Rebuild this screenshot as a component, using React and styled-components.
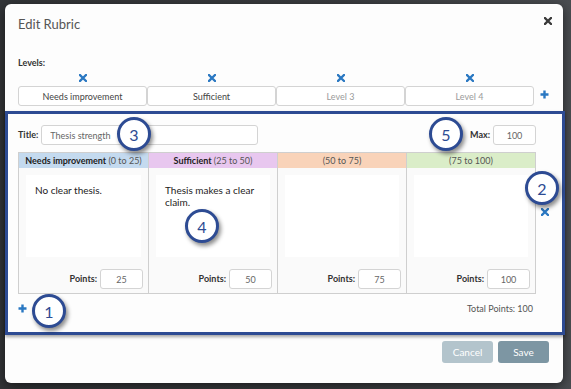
import React from 'react'
import styled, { createGlobalStyle } from 'styled-components'

const GlobalStyle = createGlobalStyle`
    body {
        margin: 0;
        background: #3c3e41;
        font-family: Lato, "Open Sans", sans-serif;
    }
`

const levels = [
    { name: 'Needs improvement', placeholder: false },
    { name: 'Sufficient', placeholder: false },
    { name: 'Level 3', placeholder: true },
    { name: 'Level 4', placeholder: true },
]

const columns = [
    { title: 'Needs improvement', range: '(0 to 25)', color: '#c4daef', text: 'No clear thesis.', points: 25 },
    { title: 'Sufficient', range: '(25 to 50)', color: '#e8c7ef', text: 'Thesis makes a clear claim.', points: 50 },
    { title: '', range: '(50 to 75)', color: '#f9d3b9', text: '', points: 75 },
    { title: '', range: '(75 to 100)', color: '#daedc8', text: '', points: 100 },
]

const callouts = [
    { n: 1, x: 24, y: 180 },
    { n: 2, x: 517, y: 57 },
    { n: 3, x: 109, y: 3 },
    { n: 4, x: 177, y: 95 },
    { n: 5, x: 421, y: 3 },
]

function Times({ color = '#2a78c2', size = 8 }) {
    return (
        <svg width={size} height={size} viewBox="0 0 8 8">
            <path d="M1 1 L7 7 M7 1 L1 7" stroke={color} strokeWidth="2.3" strokeLinecap="square" />
        </svg>
    )
}

function Plus() {
    return (
        <svg width="9" height="9" viewBox="0 0 9 9">
            <path d="M4.5 0.5 V8.5 M0.5 4.5 H8.5" stroke="#2a78c2" strokeWidth="2.4" />
        </svg>
    )
}

function App() {
    return (
        <Page>
            <GlobalStyle />
            <Modal>
                <Header>
                    <Title>Edit Rubric</Title>
                    <Close><Times color="#3a3a3a" /></Close>
                </Header>

                <Levels>
                    <Label>Levels:</Label>
                    <LevelRow>
                        <LevelGrid>
                            {levels.map(l => (
                                <LevelCol key={l.name}>
                                    <IconSlot><Times /></IconSlot>
                                    <LevelInput readOnly value={l.name} $placeholder={l.placeholder} />
                                </LevelCol>
                            ))}
                        </LevelGrid>
                        <AddLevel><Plus /></AddLevel>
                    </LevelRow>
                </Levels>

                <Frame>
                    <TitleRow>
                        <FieldGroup>
                            <Label>Title:</Label>
                            <TitleInput readOnly value="Thesis strength" />
                        </FieldGroup>
                        <FieldGroup>
                            <Label>Max:</Label>
                            <SmallInput readOnly value="100" />
                        </FieldGroup>
                    </TitleRow>

                    <BodyRow>
                        <Table>
                            {columns.map(c => (
                                <Column key={c.range}>
                                    <Head $bg={c.color}>
                                        {c.title && <b>{c.title} </b>}
                                        {c.range}
                                    </Head>
                                    <Description>{c.text}</Description>
                                    <PointsRow>
                                        <Label>Points:</Label>
                                        <SmallInput readOnly value={c.points} />
                                    </PointsRow>
                                </Column>
                            ))}
                        </Table>
                        <Side><Times /></Side>
                    </BodyRow>

                    <BottomRow>
                        <Plus />
                        <Total>Total Points: 100</Total>
                    </BottomRow>

                    {callouts.map(c => (
                        <Callout key={c.n} style={{ left: c.x, top: c.y }}>{c.n}</Callout>
                    ))}
                </Frame>

                <Footer>
                    <Button $bg="#b3c4cc">Cancel</Button>
                    <Button $bg="#7d96a3">Save</Button>
                </Footer>
            </Modal>
        </Page>
    )
}

const Page = styled.div`
    width: 571px;
    height: 389px;
    box-sizing: border-box;
    padding: 4px 0 0 5px;
    overflow: hidden;
    background: linear-gradient(90deg, #333538 0%, #3b3d40 60%, #4a4d51 100%);
`

const Modal = styled.div`
    width: 558px;
    height: 379px;
    background: #fdfdfd;
    border-radius: 6px;
    box-shadow: 0 3px 12px rgba(0, 0, 0, 0.55);
    display: flex;
    flex-direction: column;
`

const Header = styled.div`
    height: 40px;
    box-sizing: border-box;
    padding: 13px 11px 0 13px;
    display: flex;
    justify-content: space-between;
    align-items: flex-start;
`

const Title = styled.h1`
    margin: 0;
    font-size: 13px;
    line-height: 14px;
    font-weight: 400;
    color: #555;
`

const Close = styled.span`
    display: flex;
    margin-top: 0;
`

const Levels = styled.div`
    padding: 13px 0 0 13px;
`

const Label = styled.div`
    font-size: 9px;
    line-height: 12px;
    font-weight: 700;
    color: #333;
    white-space: nowrap;
`

const LevelRow = styled.div`
    display: flex;
    align-items: flex-end;
    margin-top: 3px;
`

const LevelGrid = styled.div`
    display: grid;
    grid-template-columns: repeat(4, 129px);
`

const LevelCol = styled.div`
    display: flex;
    flex-direction: column;
    align-items: center;
    gap: 2px;
`

const IconSlot = styled.span`
    height: 12px;
    display: flex;
    align-items: center;
`

const inputBase = `
    box-sizing: border-box;
    height: 20px;
    border: 1px solid #d4d4d4;
    border-radius: 3px;
    background: #fff;
    font-family: Lato, "Open Sans", sans-serif;
    font-size: 9px;
    color: #555;
    outline: none;
    padding: 0 6px;
`

const LevelInput = styled.input`
    ${inputBase}
    width: 129px;
    text-align: center;
    color: ${p => (p.$placeholder ? '#9a9a9a' : '#444')};
`

const AddLevel = styled.span`
    display: flex;
    margin: 0 0 7px 6px;
`

const Frame = styled.div`
    position: relative;
    margin: 5px -2px 0 0;
    height: 224px;
    box-sizing: border-box;
    border: 3px solid #2d4b93;
    padding: 11px 0 0 10px;
    box-shadow: 0 2px 3px rgba(0, 0, 0, 0.35);
`

const TitleRow = styled.div`
    width: 518px;
    height: 20px;
    display: flex;
    justify-content: space-between;
    align-items: center;
`

const FieldGroup = styled.div`
    display: flex;
    align-items: center;
    gap: 3px;
`

const TitleInput = styled.input`
    ${inputBase}
    width: 217px;
    padding-left: 8px;
    color: #666;
`

const SmallInput = styled.input`
    ${inputBase}
    width: 43px;
    text-align: center;
    color: #666;
`

const BodyRow = styled.div`
    display: flex;
    margin-top: 7px;
`

const Table = styled.div`
    width: 518px;
    box-sizing: border-box;
    border: 1px solid #cfcfcf;
    display: grid;
    grid-template-columns: repeat(4, 1fr);
`

const Column = styled.div`
    display: flex;
    flex-direction: column;
    background: #fafafa;
    & + & {
        border-left: 1px solid #cfcfcf;
    }
`

const Head = styled.div`
    height: 15px;
    line-height: 15px;
    background: ${p => p.$bg};
    font-size: 9px;
    color: #555;
    text-align: center;
    white-space: nowrap;
    b {
        color: #222;
    }
`

const Description = styled.div`
    margin: 7px 7px 0;
    height: 82px;
    box-sizing: border-box;
    padding: 9px;
    background: #fff;
    font-size: 10px;
    line-height: 12px;
    color: #222;
`

const PointsRow = styled.div`
    display: flex;
    justify-content: flex-end;
    align-items: center;
    gap: 3px;
    margin: 12px 5px 4px 0;
`

const Side = styled.div`
    display: flex;
    padding: 56px 0 0 5px;
`

const BottomRow = styled.div`
    width: 518px;
    height: 14px;
    margin-top: 7px;
    box-sizing: border-box;
    padding-right: 3px;
    display: flex;
    justify-content: space-between;
    align-items: center;
`

const Total = styled.span`
    font-size: 9px;
    color: #555;
`

const Callout = styled.div`
    position: absolute;
    width: 34px;
    height: 34px;
    box-sizing: border-box;
    border: 3px solid #2d4b93;
    border-radius: 50%;
    background: #fff;
    box-shadow: 2px 3px 4px rgba(0, 0, 0, 0.45);
    display: flex;
    align-items: center;
    justify-content: center;
    font-size: 16px;
    color: #2d4b93;
`

const Footer = styled.div`
    display: flex;
    justify-content: flex-end;
    gap: 5px;
    padding: 6px 14px 0 0;
`

const Button = styled.button`
    width: 51px;
    height: 22px;
    border: none;
    border-radius: 3px;
    background: ${p => p.$bg};
    color: #fff;
    font-family: Lato, "Open Sans", sans-serif;
    font-size: 10px;
    padding: 0;
`

export default App
